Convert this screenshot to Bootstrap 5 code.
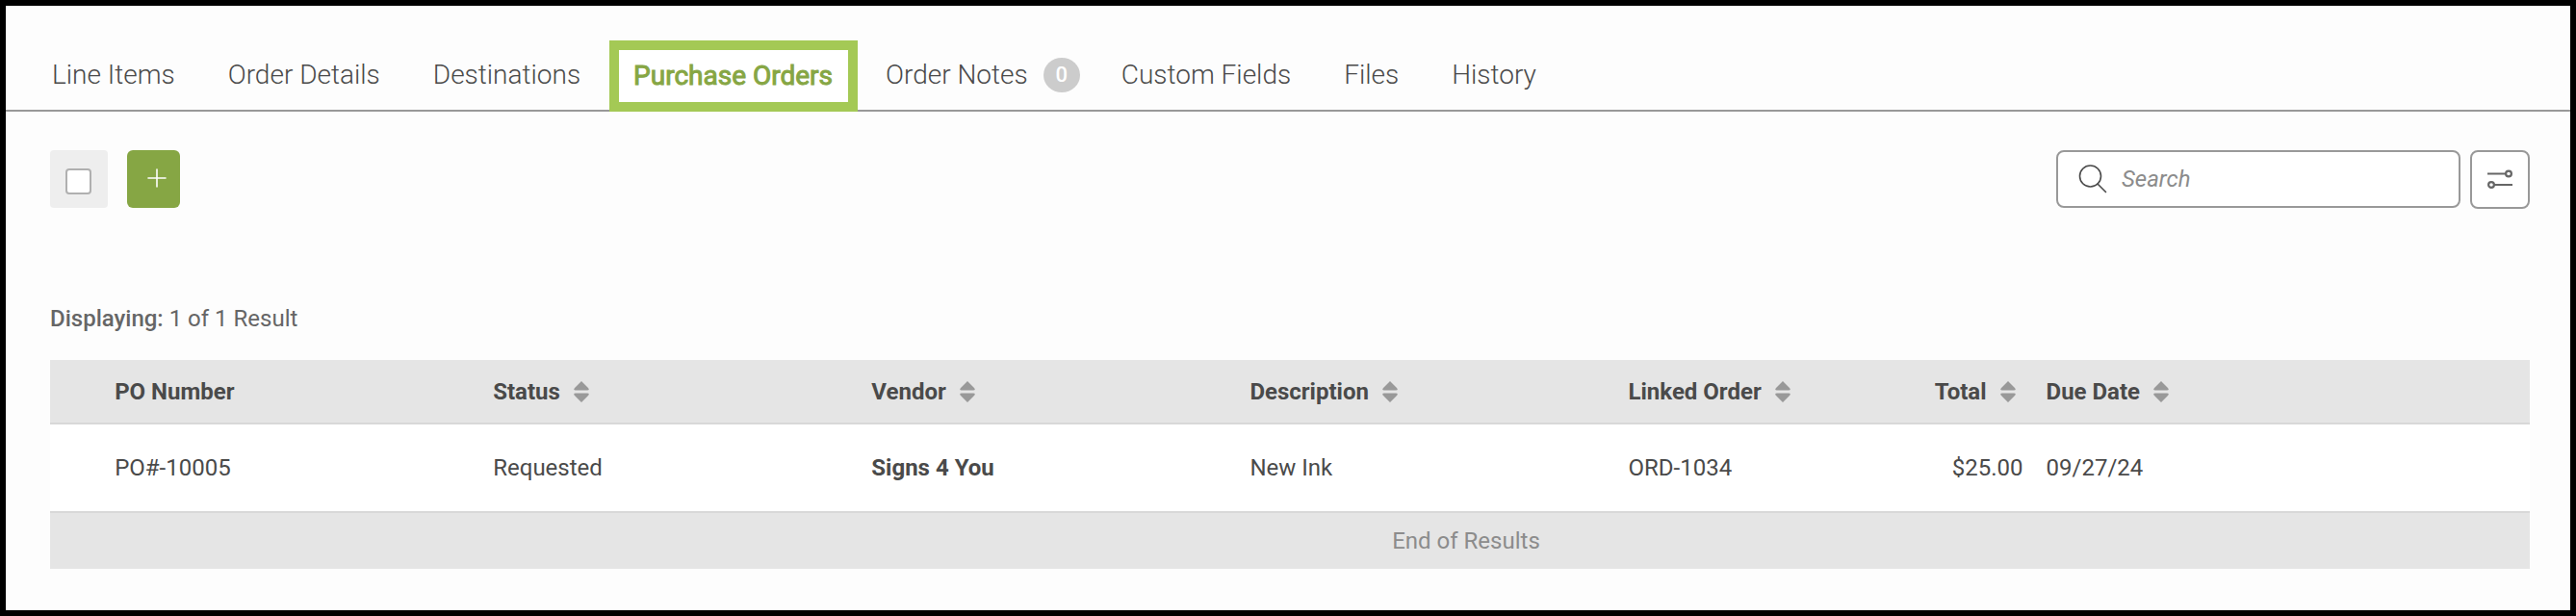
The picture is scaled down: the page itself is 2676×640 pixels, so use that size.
<!DOCTYPE html>
<html lang="en">
<head>
<meta charset="utf-8">
<meta name="viewport" content="width=device-width, initial-scale=1">
<title>Purchase Orders</title>
<link href="https://cdn.jsdelivr.net/npm/bootstrap@5.3.0/dist/css/bootstrap.min.css" rel="stylesheet">
<style>
  body { font-family: Roboto, "Liberation Sans", sans-serif; font-size: 24px; line-height: 32px; color: #4a4a4a; background: #fdfdfd; }
  .page-frame { border: 6px solid #000; }
  .order-tabs { border-bottom: 2px solid #999; padding: 36px 46px 0 48px; gap: 55px; }
  .order-tabs .nav-link { padding: 0; font-size: 28px; line-height: 72px; font-weight: 300; color: #4a4a4a; white-space: nowrap; }
  .order-tabs .nav-link.active { color: #86a644; font-weight: 400; -webkit-text-stroke: 1px #86a644; border: 10px solid #a4c955; background: #fff; line-height: 54px; padding: 0 16px 0 15px; margin: 0 -26px -2px -25px; }
  .count-badge { width: 38px; height: 36px; border-radius: 50%; background: #ccc; color: #fff; font-size: 22px; font-weight: 500; }
  .notes-tab { gap: 16px; margin-right: -12px; }
  .page-body { padding: 40px 42px 43px 46px; }
  .check-tile { width: 60px; height: 60px; border-radius: 4px; background: #eee; padding: 5px 1px 0 0; }
  .check-tile .form-check-input { width: 27px; height: 27px; margin: 0; border: 2px solid #b0b0b0; border-radius: 4px; background-color: #fff; }
  .btn-add { width: 55px; height: 60px; margin-left: 20px; padding: 0 0 2px 6px; border: 0; border-radius: 6px; background: #86a644; }
  .search-row { gap: 10px; }
  .search-field { width: 420px; height: 60px; border: 2px solid #999; border-radius: 8px; background: #fff; padding-left: 21px; gap: 15px; }
  .search-field .form-control { border: 0; padding: 0; font-size: 24px; line-height: 32px; background: none; box-shadow: none; color: #4a4a4a; }
  .search-field .form-control::placeholder { color: #8c8c8c; font-style: italic; opacity: 1; }
  .btn-filter { width: 62px; height: 61px; border: 2px solid #999; border-radius: 8px; background: #fff; padding: 0; }
  .result-count { margin-top: 98px; margin-bottom: 27px; color: #666; }
  .po-table { table-layout: fixed; margin: 0; color: #4a4a4a; }
  .po-table > :not(caption) > * > * { padding: 0 12px; background: transparent; border-bottom: 2px solid #d8d8d8; box-shadow: none; color: inherit; vertical-align: middle; }
  .po-table > thead > tr > th { height: 66px; background: #e5e5e5; font-weight: 700; white-space: nowrap; }
  .po-table > tbody > tr > td { height: 92px; background: #fff; }
  .po-table > tfoot > tr > td { height: 59px; background: #e5e5e5; border: 0; color: #8c8c8c; text-align: center; padding-left: 378px; }
  .btn-sort { border: 0; background: none; padding: 0; font-weight: inherit; color: inherit; display: inline-flex; align-items: center; gap: 14px; }
  .col-lead { width: 2.14%; }
  .col-wide { width: 15.26%; }
  .col-linked { width: 10%; }
  .col-total { width: 6.85%; }
</style>
</head>
<body>
<svg class="d-none" aria-hidden="true">
  <symbol id="sort" viewBox="0 0 16 22"><path fill="#999" d="M8 0 15 7Q17 9.5 14 9.5H2Q-1 9.5 1 7ZM8 22 1 15Q-1 12.500 2 12.500H14Q17 12.500 15 15Z"/></symbol>
</svg>
<div class="page-frame min-vh-100">
  <nav class="order-tabs nav flex-nowrap align-items-stretch" aria-label="Order sections">
    <a class="nav-link" href="#">Line Items</a>
    <a class="nav-link" href="#">Order Details</a>
    <a class="nav-link" href="#">Destinations</a>
    <a class="nav-link active" aria-current="page" href="#">Purchase Orders</a>
    <a class="nav-link notes-tab d-flex align-items-center" href="#">Order Notes <span class="count-badge d-inline-flex align-items-center justify-content-center">0</span></a>
    <a class="nav-link" href="#">Custom Fields</a>
    <a class="nav-link" href="#">Files</a>
    <a class="nav-link" href="#">History</a>
  </nav>
  <main class="page-body">
    <div class="d-flex align-items-start">
      <label class="check-tile d-flex align-items-center justify-content-center"><input class="form-check-input" type="checkbox" aria-label="Select all"></label>
      <button class="btn-add d-flex align-items-center justify-content-center" type="button" aria-label="Add purchase order">
        <svg width="20" height="20" viewBox="0 0 20 20" stroke="#fff" stroke-width="1.6" stroke-linecap="round"><path d="M10 1V19M1 10H19"/></svg>
      </button>
      <div class="search-row d-flex align-items-start ms-auto">
        <div class="search-field d-flex align-items-center">
          <svg class="flex-shrink-0" width="30" height="32" viewBox="0 0 30 32" fill="none" stroke="#4a4a4a" stroke-width="1.6" stroke-linecap="round"><circle cx="12.500" cy="13" r="11"/><path d="M20 21 28.500 29.500"/></svg>
          <input class="form-control" type="search" placeholder="Search" aria-label="Search">
        </div>
        <button class="btn-filter d-flex align-items-center justify-content-center" type="button" aria-label="Filter">
          <svg width="26" height="22" viewBox="0 0 26 22" fill="none" stroke="#666" stroke-width="2.200"><path d="M0 4.500H19M7 16H26"/><circle cx="22" cy="4.500" r="2.900"/><circle cx="4" cy="16" r="2.900"/></svg>
        </button>
      </div>
    </div>
    <p class="result-count"><span class="fw-medium">Displaying:</span> 1 of 1 Result</p>
    <table class="table po-table">
      <colgroup><col class="col-lead"><col class="col-wide"><col class="col-wide"><col class="col-wide"><col class="col-wide"><col class="col-linked"><col class="col-total"><col></colgroup>
      <thead>
        <tr>
          <th></th>
          <th>PO Number</th>
          <th><button class="btn-sort" type="button">Status <svg width="16" height="22"><use href="#sort"/></svg></button></th>
          <th><button class="btn-sort" type="button">Vendor <svg width="16" height="22"><use href="#sort"/></svg></button></th>
          <th><button class="btn-sort" type="button">Description <svg width="16" height="22"><use href="#sort"/></svg></button></th>
          <th><button class="btn-sort" type="button">Linked Order <svg width="16" height="22"><use href="#sort"/></svg></button></th>
          <th class="text-end"><button class="btn-sort me-2" type="button">Total <svg width="16" height="22"><use href="#sort"/></svg></button></th>
          <th><button class="btn-sort" type="button">Due Date <svg width="16" height="22"><use href="#sort"/></svg></button></th>
        </tr>
      </thead>
      <tbody>
        <tr>
          <td></td>
          <td>PO#-10005</td>
          <td>Requested</td>
          <td class="fw-bold">Signs 4 You</td>
          <td>New Ink</td>
          <td>ORD-1034</td>
          <td class="text-end">$25.00</td>
          <td>09/27/24</td>
        </tr>
      </tbody>
      <tfoot><tr><td colspan="8">End of Results</td></tr></tfoot>
    </table>
  </main>
</div>
<script src="https://cdn.jsdelivr.net/npm/bootstrap@5.3.0/dist/js/bootstrap.bundle.min.js"></script>
</body>
</html>
